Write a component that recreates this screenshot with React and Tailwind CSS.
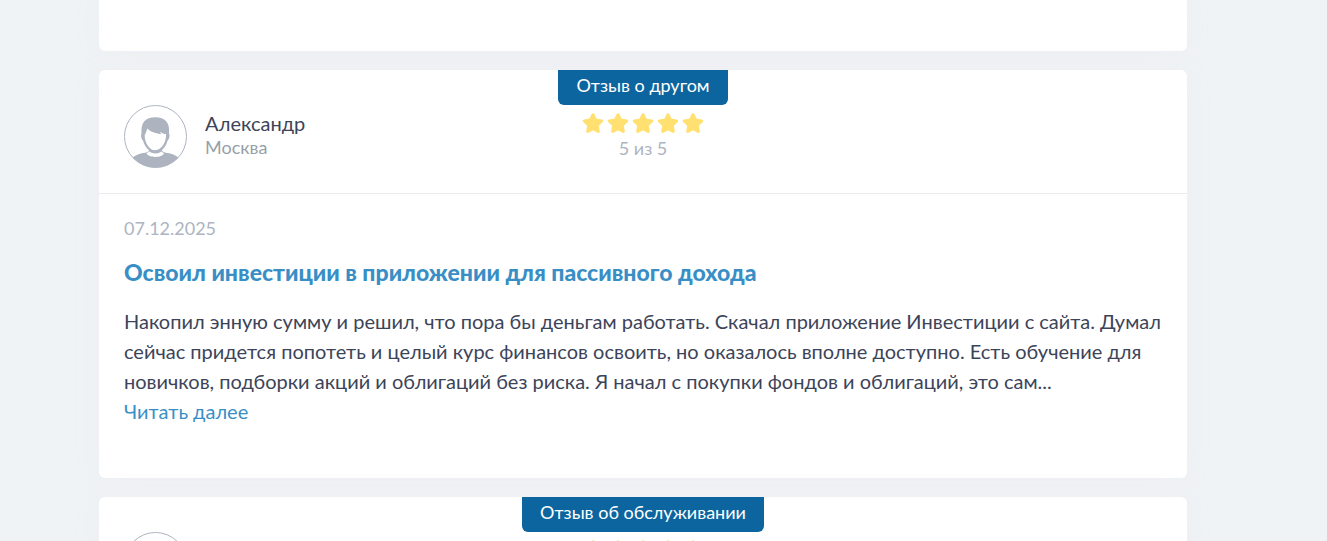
import React from "react";

const reviews = [
  {
    id: 1,
    type: "Отзыв о другом",
    name: "Александр",
    city: "Москва",
    stars: 5,
    ratingText: "5 из 5",
    date: "07.12.2025",
    title: "Освоил инвестиции в приложении для пассивного дохода",
    text: "Накопил энную сумму и решил, что пора бы деньгам работать. Скачал приложение Инвестиции с сайта. Думал сейчас придется попотеть и целый курс финансов освоить, но оказалось вполне доступно. Есть обучение для новичков, подборки акций и облигаций без риска. Я начал с покупки фондов и облигаций, это сам...",
  },
  {
    id: 2,
    type: "Отзыв об обслуживании",
    stars: 5,
  },
];

const Star = () => (
  <svg viewBox="0 0 22 21" className="h-[21px] w-[22px]" fill="#ffe070" stroke="#ffe070" strokeWidth="3" strokeLinejoin="round">
    <path d="M11 1.7 L13.6 7 L19.7 7.9 L15.3 12.2 L16.3 18.4 L11 15.6 L5.7 18.4 L6.7 12.2 L2.3 7.9 L8.4 7 Z" />
  </svg>
);

const UserAvatar = () => (
  <svg viewBox="0 0 63 63" className="h-[63px] w-[63px] shrink-0">
    <defs>
      <clipPath id="avatarCircle">
        <circle cx="31.5" cy="31.5" r="31" />
      </clipPath>
    </defs>
    <g clipPath="url(#avatarCircle)" fill="#adb4c0">
      <path d="M8 53 C12 49.5 17 48.5 21 47.8 C24 47.2 25.3 46.4 25.3 44 H37.7 C37.7 46.4 39 47.2 42 47.8 C46 48.5 51 49.5 55 53 L55 63 H8 Z" />
      <path d="M17.6 28 C16.5 18 21.5 12.3 31.3 12.3 C41 12.3 46.2 18 45 28 C46.2 30.5 45.2 34.5 43.6 35.5 C41.7 43 36.7 47.5 31.3 47.5 C26 47.5 21 43 19 35.5 C17.4 34.5 16.5 30.5 17.6 28 Z" />
    </g>
    <path fill="#fff" d="M23.3 23.5 C27 27.3 32 28.5 37.8 29.2 C36.8 28.6 36.3 27.8 36 26.7 C38 28.4 40 29 42 29.1 C42.6 36.5 37.5 45.3 31.2 45.3 C25 45.3 20.4 37 20.7 30 C21.6 28.5 22.7 26 23.3 23.5 Z" />
    <path fill="#fff" d="M22.500 48.500 L25 46.500 C29 49 34 49 37.600 46.500 L40 48.500 C38 53 25 53 22.500 48.500 Z" />
    <circle cx="31.5" cy="31.5" r="31" fill="none" stroke="#adb4c0" strokeWidth="1" />
  </svg>
);

const ReviewCard = ({ review }) => {
  return (
    <article className="shrink-0 rounded-md bg-white shadow-[0_0_30px_#eeeef1]">
      <header className="grid grid-cols-[1fr_auto_1fr] items-start border-b border-[#e9ebee] px-[25px]">
        <div className="flex gap-[18px] pt-[35px] pb-[25px]">
          <UserAvatar />
          <div className="pt-[6px]">
            <p className="text-xl leading-6 text-[#3c4459]">{review.name}</p>
            <p className="text-lg leading-6 text-[#979faa]">{review.city}</p>
          </div>
        </div>
        <div className="flex flex-col items-center">
          <div className="h-[35px] rounded-b-md bg-[#0c659e] px-[18px] text-lg leading-[30px] text-white">{review.type}</div>
          <div className="mt-2 flex gap-[3px]">
            {Array.from({ length: review.stars }).map((_, index) => (
              <Star key={index} />
            ))}
          </div>
          {review.ratingText && (
            <p className="mt-[2px] text-lg leading-6 text-[#adb4c2]">{review.ratingText}</p>
          )}
        </div>
      </header>
      {review.text && (
        <div className="px-[25px] pt-[22px] pb-[52px]">
          <time className="block text-lg leading-6 text-[#adb4c2]">{review.date}</time>
          <h2 className="mt-4 text-[23px] leading-8 font-black text-[#398fc5]">{review.title}</h2>
          <p className="mt-[18px] text-xl leading-[30px] text-[#3c4459]">{review.text}</p>
          <a href="#" className="block w-fit text-xl leading-[30px] text-[#398fc5]">Читать далее</a>
        </div>
      )}
    </article>
  );
};

const App = () => {
  return (
    <main className="flex h-screen flex-col gap-[19px] overflow-hidden bg-[#eff3f6] pr-[140px] pl-[99px] font-['Lato',sans-serif]">
      <article className="h-[51px] shrink-0 rounded-b-md bg-white shadow-[0_0_30px_#eeeef1]" />
      {reviews.map((review) => (
        <ReviewCard key={review.id} review={review} />
      ))}
    </main>
  );
};

export default App;
